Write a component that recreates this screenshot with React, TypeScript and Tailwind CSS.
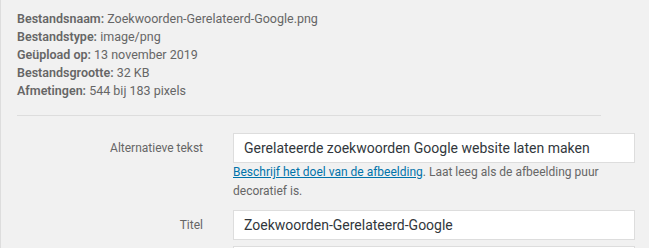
const details = [
	{ label: "Bestandsnaam:", value: "Zoekwoorden-Gerelateerd-Google.png" },
	{ label: "Bestandstype:", value: "image/png" },
	{ label: "Geüpload op:", value: "13 november 2019" },
	{ label: "Bestandsgrootte:", value: "32 KB" },
	{ label: "Afmetingen:", value: "544 bij 183 pixels" },
];

function Field({ label, value }: { label: string; value: string }) {
	return (
		<div className="flex items-center">
			<label className="w-[202px] shrink-0 text-right text-[12px] text-[#666]">
				{label}
			</label>
			<div className="ml-[30px] flex h-[30px] w-[402px] items-center border border-[#ddd] bg-white px-[10px] text-[14px] text-[#32373c]">
				{value}
			</div>
		</div>
	);
}

export default function App() {
	return (
		<div
			className="h-[248px] w-[649px] overflow-hidden border-l border-[#ddd] bg-[#f1f1f1]"
			style={{ fontFamily: "Roboto, 'Liberation Sans', sans-serif" }}
		>
			<div className="px-[16px] pt-[10px]">
				<div className="pb-[15px] text-[12.5px] leading-[18px] text-[#666]">
					{details.map((d) => (
						<div key={d.label}>
							<strong className="font-semibold">{d.label}</strong> {d.value}
						</div>
					))}
				</div>
				<div className="h-px w-[584px] bg-[#ddd]" />
			</div>
			<div className="pt-[17px]">
				<Field
					label="Alternatieve tekst"
					value="Gerelateerde zoekwoorden Google website laten maken"
				/>
				<div className="ml-[232px] w-[400px] text-[12px] leading-[19px] text-[#666]">
					<a href="#" className="text-[#0073aa] underline">
						Beschrijf het doel van de afbeelding
					</a>
					. Laat leeg als de afbeelding puur decoratief is.
				</div>
				<div className="mt-[9px]">
					<Field label="Titel" value="Zoekwoorden-Gerelateerd-Google" />
				</div>
				<div className="ml-[232px] mt-[6px] h-[30px] w-[402px] border border-[#ddd] bg-white" />
			</div>
		</div>
	);
}
